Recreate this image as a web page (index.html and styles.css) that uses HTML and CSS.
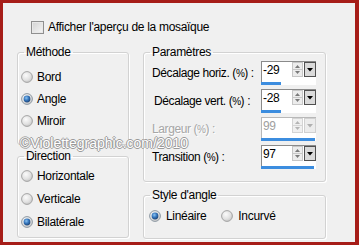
FILE: index.html
```html
<!DOCTYPE html>
<html lang="fr">
<head>
<meta charset="utf-8">
<title>Mosaïque</title>
<link rel="stylesheet" href="styles.css">
</head>
<body>
<svg class="defs" width="0" height="0" aria-hidden="true">
  <defs>
    <radialGradient id="rg" cx="0.4" cy="0.35" r="0.7">
      <stop offset="0" stop-color="#fbfbfb"/>
      <stop offset="0.6" stop-color="#e2e2e2"/>
      <stop offset="1" stop-color="#c4c4c4"/>
    </radialGradient>
    <radialGradient id="dot" cx="0.4" cy="0.35" r="0.7">
      <stop offset="0" stop-color="#8cc4f2"/>
      <stop offset="0.5" stop-color="#3576bd"/>
      <stop offset="1" stop-color="#1b3f6e"/>
    </radialGradient>
    <symbol id="radio" viewBox="0 0 12 12">
      <circle cx="6" cy="6" r="5.4" fill="url(#rg)" stroke="#a4a4a4" stroke-width="1"/>
    </symbol>
    <symbol id="radio-on" viewBox="0 0 12 12">
      <circle cx="6" cy="6" r="5.4" fill="url(#rg)" stroke="#8d98a3" stroke-width="1"/>
      <circle cx="6" cy="6" r="3.4" fill="url(#dot)"/>
    </symbol>
    <symbol id="arrows" viewBox="0 0 11 15">
      <rect x="0.5" y="0.5" width="10" height="14" fill="#ececec" stroke="#c6c6c6"/>
      <line x1="1" y1="7.5" x2="10" y2="7.5" stroke="#c8c8c8"/>
      <path d="M3 6 L8 6 L5.5 3 Z" fill="#7a7a7a"/>
      <path d="M3 9 L8 9 L5.5 12 Z" fill="#7a7a7a"/>
    </symbol>
    <symbol id="arrows-off" viewBox="0 0 11 15">
      <rect x="0.5" y="0.5" width="10" height="14" fill="#f0f0f0" stroke="#d4d4d4"/>
      <line x1="1" y1="7.5" x2="10" y2="7.5" stroke="#d6d6d6"/>
      <path d="M3 6 L8 6 L5.5 3 Z" fill="#b4b4b4"/>
      <path d="M3 9 L8 9 L5.5 12 Z" fill="#b4b4b4"/>
    </symbol>
    <symbol id="drop" viewBox="0 0 10 13">
      <path d="M2 5 L8 5 L5 8.5 Z" fill="#000"/>
    </symbol>
    <symbol id="drop-off" viewBox="0 0 10 13">
      <path d="M2 5 L8 5 L5 8.5 Z" fill="#b0b0b0"/>
    </symbol>
  </defs>
</svg>

<div class="frame">
  <label class="check-row">
    <span class="checkbox"></span>
    <span>Afficher l'aperçu de la mosaïque</span>
  </label>

  <div class="columns">
    <div class="col col-left">
      <fieldset class="group g-methode">
        <legend>Méthode</legend>
        <div class="radio-list">
          <div class="radio-row"><svg class="radio"><use href="#radio"/></svg><span>Bord</span></div>
          <div class="radio-row"><svg class="radio"><use href="#radio-on"/></svg><span>Angle</span></div>
          <div class="radio-row"><svg class="radio"><use href="#radio"/></svg><span>Miroir</span></div>
        </div>
      </fieldset>
      <fieldset class="group g-direction">
        <legend>Direction</legend>
        <div class="radio-list dir-list">
          <div class="radio-row"><svg class="radio"><use href="#radio"/></svg><span>Horizontale</span></div>
          <div class="radio-row"><svg class="radio"><use href="#radio"/></svg><span>Verticale</span></div>
          <div class="radio-row"><svg class="radio"><use href="#radio-on"/></svg><span>Bilatérale</span></div>
        </div>
      </fieldset>
    </div>

    <div class="col col-right">
      <fieldset class="group g-params">
        <legend>Paramètres</legend>
        <div class="params">
          <span class="p-label">Décalage horiz. (<span class="pct">%</span>) :</span>
          <div class="spin">
            <div class="spin-top">
              <span class="spin-value">-29</span>
              <svg class="spin-arrows"><use href="#arrows"/></svg>
              <span class="spin-drop"><svg class="drop-ico"><use href="#drop"/></svg></span>
            </div>
            <div class="spin-bar"><div class="spin-fill" style="width:35.5%"></div></div>
          </div>

          <span class="p-label p-indent">Décalage vert. (<span class="pct">%</span>) :</span>
          <div class="spin">
            <div class="spin-top">
              <span class="spin-value">-28</span>
              <svg class="spin-arrows"><use href="#arrows"/></svg>
              <span class="spin-drop"><svg class="drop-ico"><use href="#drop"/></svg></span>
            </div>
            <div class="spin-bar"><div class="spin-fill" style="width:36%"></div></div>
          </div>

          <span class="p-label p-disabled">Largeur (<span class="pct">%</span>) :</span>
          <div class="spin spin-disabled">
            <div class="spin-top">
              <span class="spin-value">99</span>
              <svg class="spin-arrows"><use href="#arrows-off"/></svg>
              <span class="spin-drop"><svg class="drop-ico"><use href="#drop-off"/></svg></span>
            </div>
            <div class="spin-bar"><div class="spin-fill" style="width:99%"></div></div>
          </div>

          <span class="p-label">Transition (<span class="pct">%</span>) :</span>
          <div class="spin">
            <div class="spin-top">
              <span class="spin-value">97</span>
              <svg class="spin-arrows"><use href="#arrows"/></svg>
              <span class="spin-drop"><svg class="drop-ico"><use href="#drop"/></svg></span>
            </div>
            <div class="spin-bar"><div class="spin-fill" style="width:97%"></div></div>
          </div>
        </div>
      </fieldset>

      <fieldset class="group g-style">
        <legend>Style d'angle</legend>
        <div class="style-row">
          <div class="radio-row"><svg class="radio"><use href="#radio-on"/></svg><span>Linéaire</span></div>
          <div class="radio-row"><svg class="radio"><use href="#radio"/></svg><span>Incurvé</span></div>
        </div>
      </fieldset>
    </div>
  </div>

  <div class="watermark">©Violettegraphic.com/2010</div>
</div>
</body>
</html>
```

FILE: styles.css
```css
* {
  box-sizing: border-box;
}

html, body {
  margin: 0;
  padding: 0;
}

body {
  width: 359px;
  height: 245px;
  overflow: hidden;
  font-family: "Liberation Sans", Arial, sans-serif;
  font-size: 12px;
  letter-spacing: -0.3px;
  color: #000;
  background: #f0f0f0;
}

.defs {
  position: absolute;
  width: 0;
  height: 0;
  overflow: hidden;
}

.frame {
  position: relative;
  width: 359px;
  height: 245px;
  border: 3px solid #a61d18;
  border-right-width: 4px;
  background: #f0f0f0;
  padding: 17px 0 0 14px;
}

.check-row {
  display: flex;
  align-items: center;
  gap: 4px;
  height: 14px;
  margin-left: 14px;
}

.checkbox {
  width: 13px;
  height: 13px;
  border: 1px solid #8f8f8f;
  background: linear-gradient(135deg, #d2d2d2, #f6f6f6);
  box-shadow: inset 0 0 0 1px #e8e8e8;
}

.columns {
  display: flex;
  gap: 14px;
  margin-top: 11px;
}

.col {
  display: flex;
  flex-direction: column;
}

.col-left {
  width: 112px;
  gap: 4px;
}

.col-right {
  width: 183px;
  gap: 6px;
}

.group {
  margin: 0;
  padding: 0;
  min-width: 0;
  border: 1px solid #d2d2d2;
  border-radius: 3px;
  box-shadow: inset 1px 1px 0 #ffffff, 1px 1px 0 #ffffff;
}

.group legend {
  margin-left: 6px;
  padding: 0 2px;
  line-height: 14px;
  height: 14px;
}

.g-methode { height: 100px; }
.g-direction { height: 89px; }
.g-params { height: 137px; }
.g-style { height: 51px; }

.radio-list {
  display: flex;
  flex-direction: column;
  padding: 7px 0 0 3px;
}

.dir-list {
  padding-top: 1px;
}

.dir-list .radio-row {
  height: 23px;
}

.radio-row {
  display: flex;
  align-items: center;
  gap: 4px;
  height: 22px;
}

.radio {
  width: 12px;
  height: 12px;
  flex: none;
}

.params {
  display: grid;
  grid-template-columns: 109px 55px;
  row-gap: 4px;
  align-items: center;
  padding: 2px 0 0 8px;
}

.p-label {
  letter-spacing: -0.4px;
  white-space: nowrap;
}

.pct {
  display: inline-block;
  font-size: 10px;
  letter-spacing: -0.6px;
}

.p-indent {
  padding-left: 2px;
}

.p-disabled {
  color: #a6a6a6;
  text-shadow: 1px 1px 0 #ffffff;
}

.spin {
  width: 55px;
  height: 24px;
  display: flex;
  flex-direction: column;
}

.spin-top {
  display: flex;
  align-items: flex-start;
  height: 21px;
  background: #ffffff;
  border-left: 1px solid #8a8a8a;
  border-top: 1px solid #8a8a8a;
}

.spin-value {
  flex: 1;
  padding-left: 1px;
  line-height: 17px;
}

.spin-arrows {
  width: 11px;
  height: 15px;
  flex: none;
}

.spin-drop {
  width: 12px;
  height: 15px;
  margin-left: 1px;
  flex: none;
  border: 1px solid #505050;
  background: #dadada;
  display: flex;
}

.drop-ico {
  width: 10px;
  height: 13px;
}

.spin-disabled .spin-value {
  color: #a0a0a0;
}

.spin-disabled .spin-top {
  border-color: #b8b8b8;
}

.spin-disabled .spin-drop {
  border-color: #d0d0d0;
  background: #ececec;
}

.spin-bar {
  height: 3px;
  background: #ffffff;
}

.spin-fill {
  height: 100%;
  background: #3c8ddf;
}

.style-row {
  display: flex;
  gap: 15px;
  padding: 3px 0 0 5px;
}

.style-row .radio-row {
  gap: 5px;
}

.watermark {
  position: absolute;
  left: 17px;
  top: 134px;
  font-size: 14px;
  line-height: 12px;
  letter-spacing: 0;
  color: #ffffff;
  text-shadow: -1px 0 0 #9a9a9a, 1px 0 0 #9a9a9a, 0 -1px 0 #9a9a9a, 0 1px 0 #9a9a9a;
  white-space: nowrap;
}
```
